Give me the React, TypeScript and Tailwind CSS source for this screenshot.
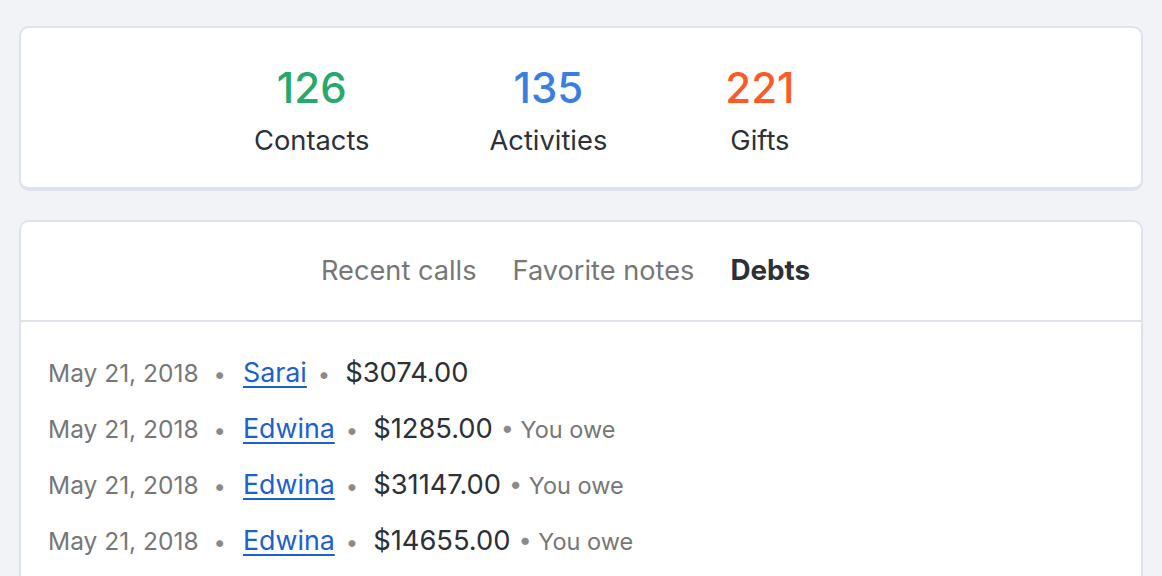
const stats = [
  { value: "126", label: "Contacts", color: "text-[#27a86c]", gap: "" },
  { value: "135", label: "Activities", color: "text-[#3a7fdf]", gap: "ml-[120px]" },
  { value: "221", label: "Gifts", color: "text-[#fc5b26]", gap: "ml-[118px]" },
]

const tabs = ["Recent calls", "Favorite notes", "Debts"]

const debts = [
  { date: "May 21, 2018", name: "Sarai", amount: "$3074.00", owe: false },
  { date: "May 21, 2018", name: "Edwina", amount: "$1285.00", owe: true },
  { date: "May 21, 2018", name: "Edwina", amount: "$31147.00", owe: true },
  { date: "May 21, 2018", name: "Edwina", amount: "$14655.00", owe: true },
]

function Dot({ className = "" }: { className?: string }) {
  return <span className={`text-[#8a8a8a] text-[22px] ${className}`}>•</span>
}

export default function App() {
  return (
    <div className="min-h-screen bg-[#f2f3f7] px-[19px] pt-[26px] font-['Inter',sans-serif] text-[#2c3038]">
      {/* Stats */}
      <div className="rounded-[10px] border-2 border-b-4 border-[#dee2ea] bg-white">
        <div className="flex pl-[233px] pt-[35px] pb-[29px]">
          {stats.map((s) => (
            <div key={s.label} className={`flex flex-col items-center ${s.gap}`}>
              <div className={`text-[42px] leading-[50px] font-medium ${s.color}`}>{s.value}</div>
              <div className="mt-[11px] text-[27.3px] leading-[34px]">{s.label}</div>
            </div>
          ))}
        </div>
      </div>

      {/* Tabs + debts */}
      <div className="mt-[29px] rounded-t-[10px] border-2 border-b-0 border-[#dee2ea] bg-white">
        <div className="flex gap-[36px] pl-[300px] h-[100px] items-center border-b-2 border-[#dee2ea]">
          {tabs.map((t, i) => (
            <span
              key={t}
              className={
                i === 2 ? "text-[27.8px] font-bold text-[#2c3038]" : "text-[27.2px] text-[#777777]"
              }
            >
              {t}
            </span>
          ))}
        </div>
        <ul className="flex flex-col gap-[20px] px-[27px] pt-[30px] pb-[20px]">
          {debts.map((d, i) => (
            <li key={i} className="flex items-baseline h-[36px]">
              <span className="mr-[15px] text-[24.5px] text-[#777777]">{d.date}</span>
              <Dot className="mr-[17px]" />
              <a href="#" className="mr-[11px] text-[26.8px] text-[#1b5fd4] underline underline-offset-4">
                {d.name}
              </a>
              <Dot className="mr-[15px]" />
              <span className="text-[27.3px]">{d.amount}</span>
              {d.owe && (
                <span className="ml-[8px] text-[23.5px] text-[#777777]">
                  <span className="text-[#8a8a8a]">•</span> You owe
                </span>
              )}
            </li>
          ))}
        </ul>
      </div>
    </div>
  )
}
